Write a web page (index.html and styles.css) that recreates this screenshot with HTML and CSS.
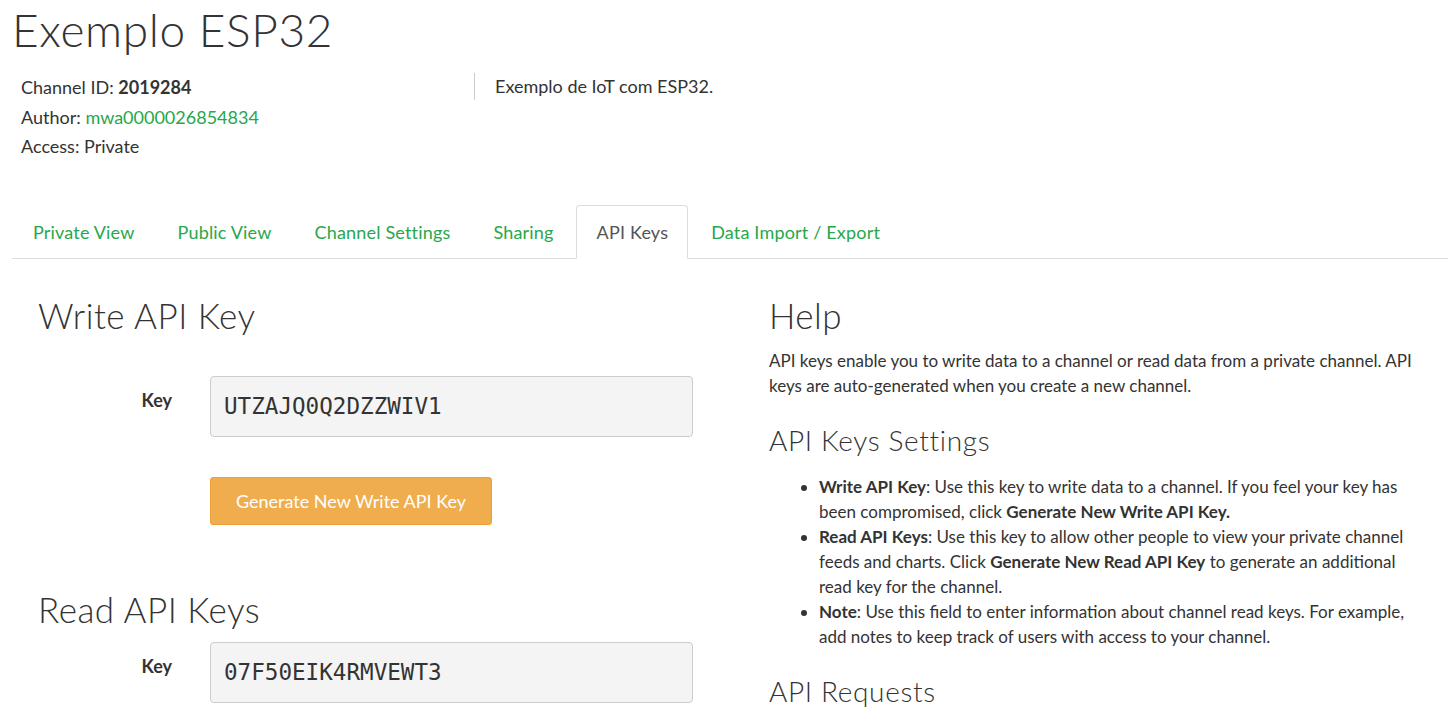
FILE: index.html
```html
<!DOCTYPE html>
<html lang="en">
<head>
<meta charset="utf-8">
<title>Exemplo ESP32</title>
<link rel="stylesheet" href="styles.css">
</head>
<body>
<div class="page">
  <h1 class="title">Exemplo ESP32</h1>
  <div class="meta">
    <div class="meta-info">
      <p>Channel ID: <strong>2019284</strong></p>
      <p>Author: <a href="#" class="link">mwa0000026854834</a></p>
      <p>Access: Private</p>
    </div>
    <div class="meta-desc">Exemplo de IoT com ESP32.</div>
  </div>

  <ul class="tabs">
    <li><a href="#">Private View</a></li>
    <li><a href="#">Public View</a></li>
    <li><a href="#">Channel Settings</a></li>
    <li><a href="#">Sharing</a></li>
    <li class="active"><a href="#">API Keys</a></li>
    <li><a href="#">Data Import / Export</a></li>
  </ul>

  <div class="content">
    <div class="left">
      <h2 class="section">Write API Key</h2>
      <div class="field field-write">
        <label class="field-label">Key</label>
        <div class="key-box">UTZAJQ0Q2DZZWIV1</div>
      </div>
      <div class="btn-row">
        <button class="btn-warning">Generate New Write API Key</button>
      </div>
      <h2 class="section section-read">Read API Keys</h2>
      <div class="field">
        <label class="field-label">Key</label>
        <div class="key-box">07F50EIK4RMVEWT3</div>
      </div>
    </div>
    <div class="right">
      <h2 class="help-title">Help</h2>
      <p class="help-text">API keys enable you to write data to a channel or read data from a private channel. API keys are auto-generated when you create a new channel.</p>
      <h3 class="help-sub">API Keys Settings</h3>
      <ul class="help-list">
        <li><strong>Write API Key</strong>: Use this key to write data to a channel. If you feel your key has been compromised, click <strong>Generate New Write API Key.</strong></li>
        <li><strong>Read API Keys</strong>: Use this key to allow other people to view your private channel feeds and charts. Click <strong>Generate New Read API Key</strong> to generate an additional read key for the channel.</li>
        <li><strong>Note</strong>: Use this field to enter information about channel read keys. For example, add notes to keep track of users with access to your channel.</li>
      </ul>
      <h3 class="help-sub help-sub2">API Requests</h3>
    </div>
  </div>
</div>
</body>
</html>
```

FILE: styles.css
```css
* { box-sizing: border-box; }
html, body { margin: 0; padding: 0; background: #fff; }
body {
  font-family: Lato, "Open Sans", sans-serif;
  color: #333;
  font-size: 17px;
  overflow: hidden;
}
.page { padding: 0 8px 0 12px; }
.title {
  font-family: Lato, sans-serif;
  font-weight: 300;
  font-size: 46px;
  line-height: 50px;
  margin: 5px 0 0 0;
  color: #333;
  letter-spacing: 0.6px;
}
.meta {
  display: flex;
  margin-top: 18px;
  padding-left: 9px;
}
.meta-info { width: 453px; }
.meta-info p { margin: 0; line-height: 29.5px; font-size: 18px; }
.meta-info strong { font-weight: 700; }
.link { color: #27a74b; text-decoration: none; }
.meta-desc {
  border-left: 1px solid #ccc;
  height: 27px;
  margin-top: 0;
  padding-left: 20px;
  font-size: 18px;
  line-height: 27px;
}
.tabs {
  list-style: none;
  margin: 43px 0 0 0;
  padding: 0;
  display: flex;
  border-bottom: 1px solid #ddd;
}
.tabs li { margin-bottom: -1px; margin-right: 2px; }
.tabs a {
  display: block;
  padding: 0 19px 0 20px;
  height: 54px;
  line-height: 53px;
  font-size: 18px;
  letter-spacing: 0.18px;
  color: #27a74b;
  text-decoration: none;
  border: 1px solid transparent;
  border-radius: 4px 4px 0 0;
}
.tabs li.active a {
  color: #555;
  border-color: #ddd;
  border-bottom-color: #fff;
  background: #fff;
}
.content {
  display: flex;
  padding-left: 26px;
}
.left { width: 655px; }
.right { margin-left: 76px; width: 660px; }
.section {
  font-family: Lato, sans-serif;
  font-weight: 300;
  font-size: 35px;
  line-height: 40px;
  letter-spacing: 0.5px;
  margin: 36px 0 0 0;
}
.field {
  display: flex;
  align-items: flex-start;
  margin-top: 41px;
}
.field-label {
  width: 134px;
  text-align: right;
  font-weight: 700;
  font-size: 18px;
  line-height: 24px;
  padding-top: 12px;
  margin-right: 38px;
}
.key-box {
  width: 483px;
  height: 61px;
  background: #f4f4f4;
  border: 1px solid #ccc;
  border-radius: 4px;
  font-family: "DejaVu Sans Mono", monospace;
  font-size: 22.6px;
  line-height: 59px;
  padding-left: 13px;
  color: #333;
}
.btn-row { padding-left: 172px; margin-top: 40px; }
.btn-warning {
  background: #f0ad4e;
  border: 1px solid #eea236;
  border-radius: 3px;
  color: #fff;
  font-family: Lato, sans-serif;
  font-size: 18px;
  height: 48px;
  width: 282px;
  padding: 0;
}
.section-read { margin-top: 64px; }
.section-read + .field { margin-top: 13px; }
.help-title {
  font-family: Lato, sans-serif;
  font-weight: 300;
  font-size: 35px;
  line-height: 40px;
  letter-spacing: 0.5px;
  margin: 36px 0 0 0;
}
.help-text { margin: 13px 0 0 0; line-height: 25px; font-size: 17px; }
.help-sub {
  font-family: Lato, sans-serif;
  font-weight: 300;
  font-size: 28px;
  line-height: 32px;
  letter-spacing: 0.65px;
  margin: 26px 0 0 0;
}
.help-list { margin: 18px 0 0 0; padding-left: 50px; }
.help-list li { line-height: 25px; font-size: 17px; }
.help-sub2 { margin-top: 26px; }
```
